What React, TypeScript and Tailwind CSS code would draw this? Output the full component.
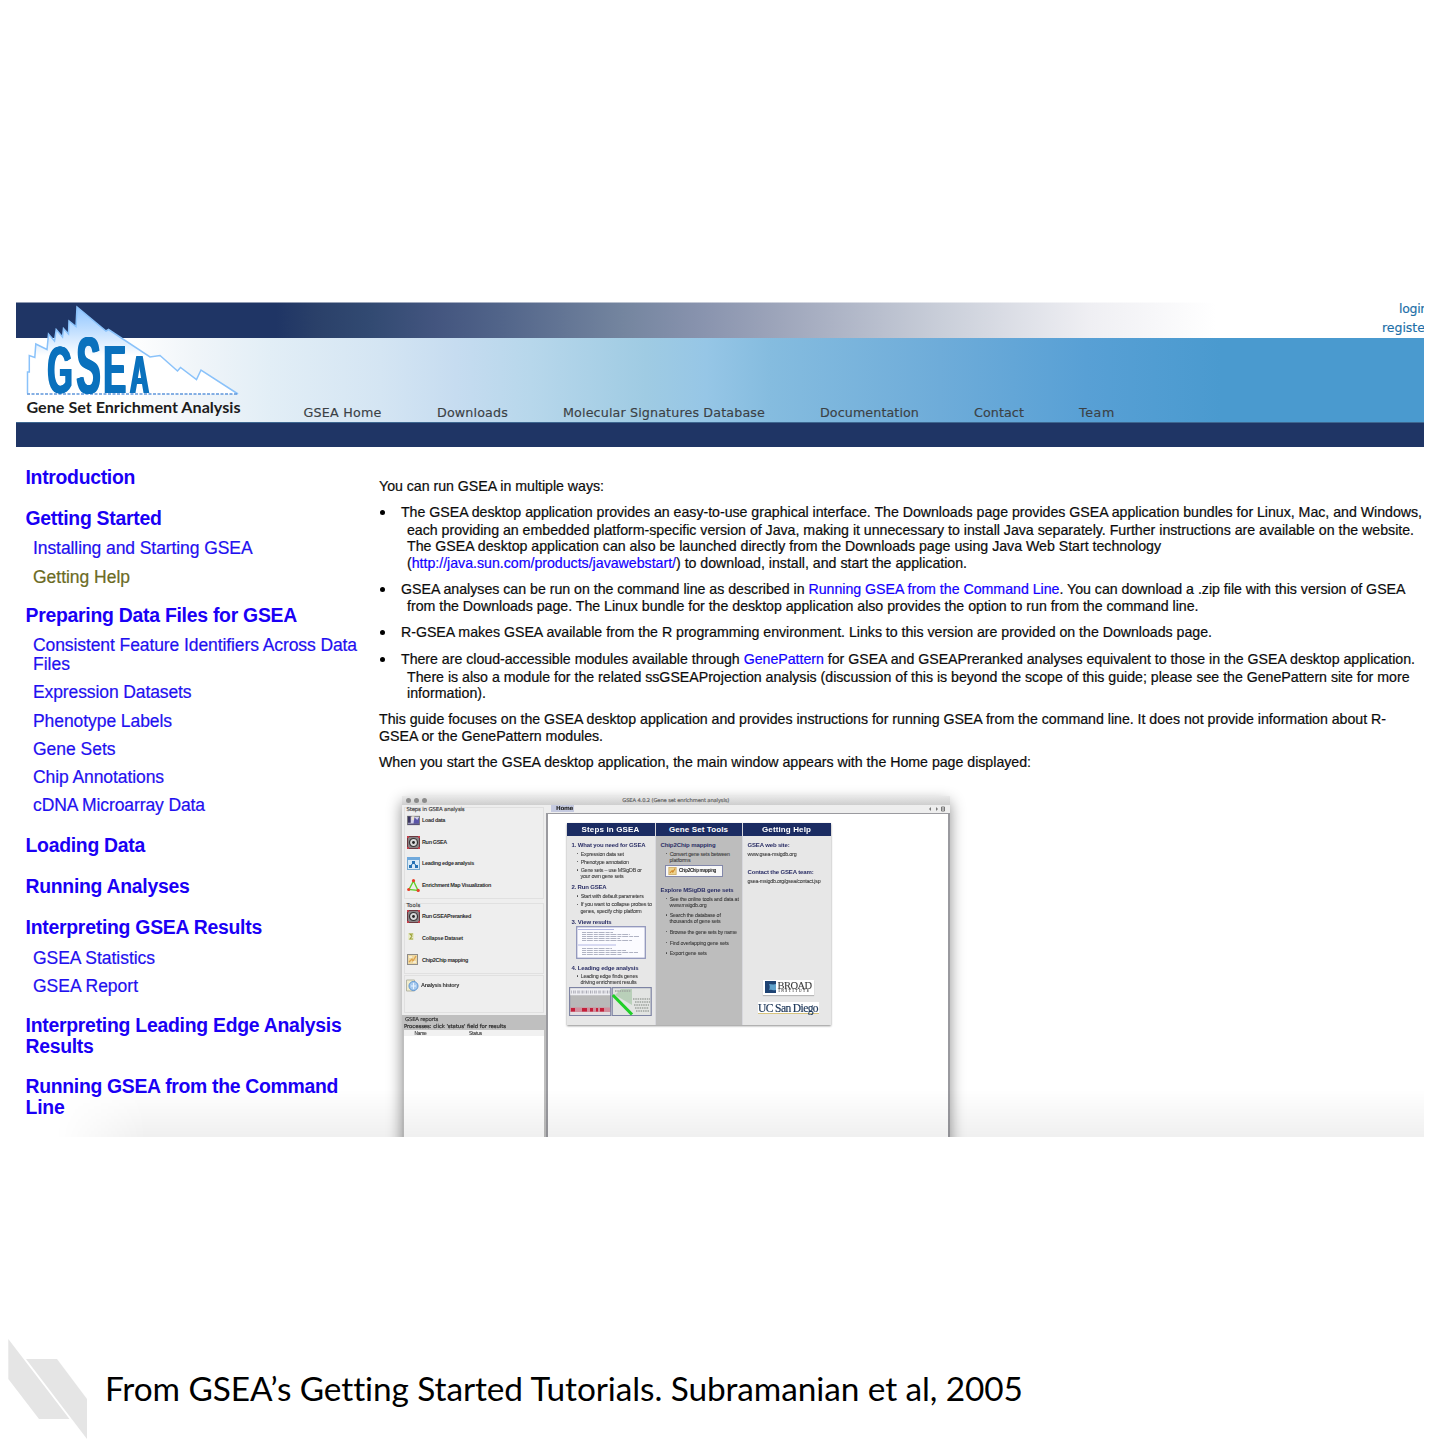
import { useLayoutEffect, useRef, type ReactNode } from 'react';

/** A single line of text whose tracking is adjusted so that it fills `w` pixels. */
function Fit({ w, className = '', children }: { w: number; className?: string; children: ReactNode }) {
  const ref = useRef<HTMLSpanElement>(null);
  useLayoutEffect(() => {
    const el = ref.current;
    if (!el) return;
    el.style.letterSpacing = '0px';
    const count = (el.textContent || '').length;
    const natural = el.offsetWidth > 0 ? el.getBoundingClientRect().width : w;
    el.style.letterSpacing = `${(w - natural) / Math.max(1, count)}px`;
  }, [w]);
  return (
    <div className={`whitespace-nowrap ${className}`}>
      <span ref={ref} className="inline-block">
        {children}
      </span>
    </div>
  );
}

function Logo() {
  const letter = 'fill-[#0a71bd] font-bold [font-family:"Liberation_Sans",Arial,sans-serif]';
  return (
    <svg viewBox="16 302 240 120" width="240" height="120" className="absolute left-0 top-0">
      <defs>
        <linearGradient id="peak" x1="0" y1="307" x2="0" y2="356" gradientUnits="userSpaceOnUse">
          <stop offset="0" stopColor="#8fc5ff" />
          <stop offset="0.5" stopColor="#c3e0ff" />
          <stop offset="1" stopColor="#ffffff" />
        </linearGradient>
      </defs>
      <path
        d="M27.5 393.5V372H29.3V355.5L34.8 357.5L35.8 344L47 349.5L48.5 334L54.5 341L56.2 329.5L62.5 337L63.5 328.5L68.5 334L69 321L76 326.5L77 307L106 331L108.5 329.5L150 357L160 355.5L177.500 371L180.500 367.500L196.500 379.500L201 370L238 394Z"
        fill="url(#peak)"
      />
      <path
        d="M27.5 393.5V372H29.3V355.5L34.8 357.5L35.8 344L47 349.5L48.5 334L54.5 341L56.2 329.5L62.5 337L63.5 328.5L68.5 334L69 321L76 326.5L77 307L106 331L108.5 329.5L150 357L160 355.5L177.500 371L180.500 367.500L196.500 379.500L201 370L238 394"
        fill="none"
        stroke="#8ac2fa"
        strokeWidth="1.500"
      />
      <path d="M27 394H238" stroke="#5f96dc" strokeWidth="1.5" strokeDasharray="3 1.5" />
      <g className="[filter:drop-shadow(1px_0_0_#0a71bd)_drop-shadow(-1px_0_0_#0a71bd)]">
        <text x="47.500" y="393" fontSize="66" textLength="25" lengthAdjust="spacingAndGlyphs" className={letter}>G</text>
        <text x="76.500" y="393" fontSize="80" textLength="24" lengthAdjust="spacingAndGlyphs" className={letter}>S</text>
        <text x="103.500" y="393" fontSize="68" textLength="22.500" lengthAdjust="spacingAndGlyphs" className={letter}>E</text>
        <text x="130" y="393" fontSize="53" textLength="19" lengthAdjust="spacingAndGlyphs" className={letter}>A</text>
      </g>
      <text
        x="26.500"
        y="412.500"
        fontSize="15.800"
        textLength="214"
        lengthAdjust="spacingAndGlyphs"
        className='fill-[#1c1c1c] font-bold [font-family:Lato,sans-serif]'
      >
        Gene Set Enrichment Analysis
      </text>
    </svg>
  );
}

function Header() {
  const nav = "text-[12.7px] leading-4 text-[#3b4145] [-webkit-text-stroke:0.15px]";
  return (
    <header className='relative h-[145px] shrink-0 [font-family:"DejaVu_Sans",Verdana,sans-serif]'>
      <div className="flex h-[36px] justify-end border-t border-white/50 bg-[linear-gradient(90deg,#1f3565_0px,#1f3565_260px,#2a4069_300px,#324a72_355px,#43557f_420px,#52658a_487px,#74859f_607px,#8792ad_680px,#9ba3b9_754px,#c9ced9_924px,#e0e2e9_1014px,#efeff3_1074px,#ffffff_1200px)]">
        <div className="flex w-[42px] flex-col overflow-visible text-[12.5px] text-[#1d6fa8] [-webkit-text-stroke:0.15px]">
          <Fit w={29} className="ml-[17px] h-[19px] leading-[12px]">login</Fit>
          <Fit w={48} className="h-4 leading-[12px]">register</Fit>
        </div>
      </div>
      <div className="h-[84px] bg-[linear-gradient(90deg,#ffffff_0px,#ffffff_110px,#f0f5f9_180px,#e2eef6_254px,#d4e5f3_365px,#c6dcf0_440px,#b7d7eb_515px,#9fcbe3_630px,#96c6e6_690px,#85bcdf_754px,#6eacd9_924px,#58a0d5_1070px,#4a9acf_1205px)]">
        <nav className="flex pl-[287.500px] pt-[67px]">
          <Fit w={78} className={`w-[133.500px] ${nav}`}>GSEA Home</Fit>
          <Fit w={71} className={`w-[126px] ${nav}`}>Downloads</Fit>
          <Fit w={202} className={`w-[257px] ${nav}`}>Molecular Signatures Database</Fit>
          <Fit w={99} className={`w-[154px] ${nav}`}>Documentation</Fit>
          <Fit w={50} className={`w-[105px] ${nav}`}>Contact</Fit>
          <Fit w={36} className={nav}>Team</Fit>
        </nav>
      </div>
      <div className="h-[25px] border-t border-[#3d6690] bg-[#1f3565]" />
      <Logo />
    </header>
  );
}

function Sidebar() {
  const head = 'h-[18px] pl-[9.5px] text-[19.4px] leading-[18px] font-bold text-[#1a00f5]';
  const item = 'relative top-[0.6px] h-[18px] pl-[17px] text-[17.5px] leading-[18px] text-[#1f10f0] [-webkit-text-stroke:0.2px]';
  return (
    <aside className="w-[363px] shrink-0 pt-[20.9px]">
      <Fit w={109.5} className={head}>Introduction</Fit>
      <Fit w={136} className={`mt-[22.9px] ${head}`}>Getting Started</Fit>
      <Fit w={219.5} className={`mt-[12.1px] ${item}`}>Installing and Starting GSEA</Fit>
      <Fit w={97} className="relative top-[0.6px] mt-[10.5px] h-[18px] pl-[17px] text-[17.5px] leading-[18px] text-[#6b6b1f] [-webkit-text-stroke:0.2px]">Getting Help</Fit>
      <Fit w={271.5} className={`mt-[20.5px] ${head}`}>Preparing Data Files for GSEA</Fit>
      <Fit w={324} className={`mt-[12px] ${item}`}>Consistent Feature Identifiers Across Data</Fit>
      <Fit w={37} className={`mt-[0.5px] ${item}`}>Files</Fit>
      <Fit w={158.5} className={`mt-[10.5px] ${item}`}>Expression Datasets</Fit>
      <Fit w={139} className={`mt-[10.5px] ${item}`}>Phenotype Labels</Fit>
      <Fit w={82.5} className={`mt-[10px] ${item}`}>Gene Sets</Fit>
      <Fit w={131} className={`mt-[10.2px] ${item}`}>Chip Annotations</Fit>
      <Fit w={172} className={`mt-[10.3px] ${item}`}>cDNA Microarray Data</Fit>
      <Fit w={119.5} className={`mt-[22px] ${head}`}>Loading Data</Fit>
      <Fit w={164} className={`mt-[23.5px] ${head}`}>Running Analyses</Fit>
      <Fit w={236.5} className={`mt-[23px] ${head}`}>Interpreting GSEA Results</Fit>
      <Fit w={122} className={`mt-[12px] ${item}`}>GSEA Statistics</Fit>
      <Fit w={105} className={`mt-[10px] ${item}`}>GSEA Report</Fit>
      <Fit w={316} className={`mt-[21.5px] ${head}`}>Interpreting Leading Edge Analysis</Fit>
      <Fit w={68} className={`mt-[3.3px] ${head}`}>Results</Fit>
      <Fit w={312.5} className={`mt-[21.9px] ${head}`}>Running GSEA from the Command</Fit>
      <Fit w={39} className={`mt-[3.3px] ${head}`}>Line</Fit>
    </aside>
  );
}

function Bullet({ w, className = '', children }: { w: number; className?: string; children: ReactNode }) {
  return (
    <div className={`flex h-4 items-center ${className}`}>
      <span className="mt-px mr-[15.7px] ml-[0.8px] size-[5.5px] shrink-0 rounded-full bg-black" />
      <Fit w={w}>{children}</Fit>
    </div>
  );
}

function GuideText() {
  const link = 'text-[#1400ff]';
  return (
    <div className="text-[14.2px] leading-4 text-[#0c0c0c] [-webkit-text-stroke:0.2px]">
      <Fit w={225} className="h-4">You can run GSEA in multiple ways:</Fit>
      <Bullet w={1021} className="mt-[10px]">The GSEA desktop application provides an easy-to-use graphical interface. The Downloads page provides GSEA application bundles for Linux, Mac, and Windows,</Bullet>
      <Fit w={1007} className="mt-[2px] h-4 pl-7">each providing an embedded platform-specific version of Java, making it unnecessary to install Java separately. Further instructions are available on the website.</Fit>
      <Fit w={754} className="h-4 pl-7">The GSEA desktop application can also be launched directly from the Downloads page using Java Web Start technology</Fit>
      <Fit w={560} className="mt-[1px] h-4 pl-7">(<span className={link}>http://java.sun.com/products/javawebstart/</span>) to download, install, and start the application.</Fit>
      <Bullet w={1004.5} className="mt-[10px]">GSEA analyses can be run on the command line as described in <span className={link}>Running GSEA from the Command Line</span>. You can download a .zip file with this version of GSEA</Bullet>
      <Fit w={791.5} className="mt-[1px] h-4 pl-7">from the Downloads page. The Linux bundle for the desktop application also provides the option to run from the command line.</Fit>
      <Bullet w={811} className="mt-[10px]">R-GSEA makes GSEA available from the R programming environment. Links to this version are provided on the Downloads page.</Bullet>
      <Bullet w={1014} className="mt-[11px]">There are cloud-accessible modules available through <span className={link}>GenePattern</span> for GSEA and GSEAPreranked analyses equivalent to those in the GSEA desktop application.</Bullet>
      <Fit w={1002.5} className="mt-[2px] h-4 pl-7">There is also a module for the related ssGSEAProjection analysis (discussion of this is beyond the scope of this guide; please see the GenePattern site for more</Fit>
      <Fit w={79} className="h-4 pl-7">information).</Fit>
      <Fit w={1007} className="mt-[10px] h-4">This guide focuses on the GSEA desktop application and provides instructions for running GSEA from the command line. It does not provide information about R-</Fit>
      <Fit w={224} className="mt-[1px] h-4">GSEA or the GenePattern modules.</Fit>
      <Fit w={652} className="mt-[10px] h-4">When you start the GSEA desktop application, the main window appears with the Home page displayed:</Fit>
    </div>
  );
}

function TargetIcon() {
  return (
    <svg width="13" height="13" viewBox="0 0 13 13">
      <rect x="0.500" y="0.500" width="12" height="12" fill="#8a8184" stroke="#6b3a40" />
      <circle cx="6.500" cy="6.500" r="4" fill="#d9d9d9" stroke="#353535" strokeWidth="1.2" />
      <circle cx="6.500" cy="6.500" r="1.4" fill="#222" />
      <path d="M0 0h2v2H0zM11 0h2v2h-2zM0 11h2v2H0zM11 11h2v2h-2z" fill="#c2404c" />
    </svg>
  );
}

function LoadIcon() {
  return (
    <svg width="14" height="11" viewBox="0 0 14 11">
      <rect x="0.500" y="1" width="13" height="9" fill="#cfcfe8" stroke="#777" />
      <path d="M1 1h3v7H1z" fill="#3a3560" />
      <path d="M5 1h3v4H5z" fill="#ece3cf" />
      <path d="M8 2l3 3l2-3v7H7z" fill="#5a55a8" />
      <path d="M1 9.500h12" stroke="#514b75" strokeWidth="1.5" />
    </svg>
  );
}

function EdgeIcon() {
  return (
    <svg width="13" height="13" viewBox="0 0 13 13">
      <rect x="0.500" y="0.500" width="12" height="12" fill="#d8ebf8" stroke="#78a9cf" />
      <path d="M0 0h13v3H0z" fill="#70a9dc" />
      <path d="M5 4h3v3H5zM2 8h3v3H2zM8 8h3v3H8z" fill="#2472b6" />
      <path d="M6.500 6L3 9M6.500 6L10 9" stroke="#2472b6" />
    </svg>
  );
}

function MapIcon() {
  return (
    <svg width="13" height="13" viewBox="0 0 13 13">
      <path d="M6.500 2L2 10.500L11 11.500Z" fill="none" stroke="#62d02c" strokeWidth="1.4" />
      <circle cx="6.500" cy="1.700" r="1.6" fill="#e8402a" />
      <circle cx="1.700" cy="10.500" r="1.6" fill="#e8402a" />
      <circle cx="11.200" cy="11.400" r="1.6" fill="#e8402a" />
    </svg>
  );
}

function CollapseIcon() {
  return (
    <svg width="13" height="13" viewBox="0 0 13 13">
      <rect x="1" y="1" width="6" height="7" fill="#e7e9c9" />
      <path d="M6 2H3l2 2l-2 3h3" fill="none" stroke="#9aa136" strokeWidth="1.1" />
    </svg>
  );
}

function ChipIcon() {
  return (
    <svg width="13" height="13" viewBox="0 0 13 13">
      <rect x="0.500" y="0.500" width="10" height="10" fill="#edd9a4" stroke="#8d8b88" />
      <path d="M2 8l3-3l1 2l3-5" fill="none" stroke="#dda14a" strokeWidth="1.3" />
      <path d="M2 3h3M6 8h3" stroke="#fff" />
    </svg>
  );
}

function HistoryIcon() {
  return (
    <svg width="13" height="13" viewBox="0 0 13 13">
      <path d="M0.500 1h8v11h-8z" fill="#f0eccd" stroke="#b3b4a4" />
      <circle cx="7.500" cy="7" r="4.500" fill="#a7caef" stroke="#5c93d0" />
      <path d="M5 7h5M7.500 4v6" stroke="#e8f3ff" />
    </svg>
  );
}

function ToolRow({ icon, w, className = '', children }: { icon: ReactNode; w: number; className?: string; children: string }) {
  return (
    <div className={`flex h-[13px] items-center text-[5.5px] leading-[13px] font-bold text-[#2e2e2e] ${className}`}>
      <span className="mr-[2.500px] flex w-[13px] shrink-0">{icon}</span>
      <Fit w={w}>{children}</Fit>
    </div>
  );
}

function LeftPane() {
  const verdana = '[font-family:"DejaVu_Sans",sans-serif] text-[5.4px] leading-[6px] [-webkit-text-stroke:0.15px]';
  return (
    <div className="flex w-[143.500px] shrink-0 flex-col bg-[#eeeeee] pt-[2px]">
      <fieldset className="mx-[2px] h-[92px] border border-[#e0e0e0] pl-[1.5px]">
        <Fit w={58} className={`-mt-[2px] text-[#3a3a3a] ${verdana}`}>Steps in GSEA analysis</Fit>
        <ToolRow icon={<LoadIcon />} w={23} className="mt-[2px]">Load data</ToolRow>
        <ToolRow icon={<TargetIcon />} w={25} className="mt-[9px]">Run GSEA</ToolRow>
        <ToolRow icon={<EdgeIcon />} w={52} className="mt-[8.500px]">Leading edge analysis</ToolRow>
        <ToolRow icon={<MapIcon />} w={69} className="mt-[9px]">Enrichment Map Visualization</ToolRow>
      </fieldset>
      <fieldset className="mx-[2px] mt-[4px] h-[71px] border border-[#e0e0e0] pl-[1.5px]">
        <Fit w={14} className={`-mt-[2px] text-[#3a3a3a] ${verdana}`}>Tools</Fit>
        <ToolRow icon={<TargetIcon />} w={49} className="mt-[2px]">Run GSEAPreranked</ToolRow>
        <ToolRow icon={<CollapseIcon />} w={41} className="mt-[9px]">Collapse Dataset</ToolRow>
        <ToolRow icon={<ChipIcon />} w={46} className="mt-[9px]">Chip2Chip mapping</ToolRow>
      </fieldset>
      <fieldset className="mx-[2px] mt-[1px] h-[38px] border border-[#e0e0e0] pl-[0.5px] pt-[3px]">
        <ToolRow icon={<HistoryIcon />} w={38}>Analysis history</ToolRow>
      </fieldset>
      <div className="mt-[2px] flex grow flex-col bg-[#bfbfbf] pt-[1.500px]">
        <Fit w={33} className={`pl-[3px] text-[#333] ${verdana}`}>GSEA reports</Fit>
        <Fit w={102} className={`mt-[1.3px] pl-[2px] text-[#222] ${verdana}`}>Processes: click 'status' field for results</Fit>
        <div className="mx-[2px] mt-[0.700px] grow bg-white text-[4.8px] leading-[7px] text-[#333] [-webkit-text-stroke:0.1px]">
          <div className="flex h-[6px] bg-[#f1f1f1]">
            <Fit w={12} className="w-[65px] pl-[10.500px]">Name</Fit>
            <Fit w={13}>Status</Fit>
          </div>
        </div>
      </div>
    </div>
  );
}

const colHead = 'flex h-[13.500px] items-center justify-center bg-[#1b2c62] pt-px text-[8px] font-bold text-white';
const h = 'h-[6px] pl-[5px] text-[6px] leading-[6px] font-bold text-[#2b2f66]';
const p = 'h-[6px] text-[5.300px] leading-[6px] text-[#3c3c3c] [-webkit-text-stroke:0.08px]';

function Dot({ w, className = '', children }: { w: number; className?: string; children: string }) {
  return (
    <div className={`flex items-center pl-[10.500px] ${p} ${className}`}>
      <span className="mr-[2.500px] size-[1.2px] shrink-0 rounded-full bg-[#444]" />
      <Fit w={w}>{children}</Fit>
    </div>
  );
}

function ReportThumb() {
  return (
    <svg width="70" height="33" viewBox="0 0 70 33" className="mt-[1.500px] ml-[9px]">
      <rect x="0.700" y="0.700" width="68.600" height="31.600" fill="#fbfbff" stroke="#9095ba" strokeWidth="1.3" />
      <path d="M2 3.500h36M2 19h38" stroke="#a2a7dd" strokeWidth="0.800" />
      <path d="M6 6.500h31M6 8.500h48M6 10.500h57M6 12.500h38M6 14.500h50M6 22.500h30M6 24.500h44M6 26.500h56M6 28.500h40" stroke="#8f93a9" strokeWidth="0.700" strokeDasharray="4 0.800 6 1" />
    </svg>
  );
}

function HeatThumbs() {
  return (
    <svg width="83" height="29" viewBox="0 0 83 29" className="mt-[2px] ml-[2px]">
      <rect x="0.600" y="0.600" width="41" height="28" fill="#b9b9b9" stroke="#7d83a3" strokeWidth="1.200" />
      <path d="M1.200 1.200h40v7h-40z" fill="#eeeef2" />
      <path d="M2 5h39" stroke="#a9a9b4" strokeWidth="3" strokeDasharray="0.700 1.500 1.200 0.800" />
      <path d="M1.200 20.500h40v4.500h-40z" fill="#cf8f9d" />
      <path d="M2 22.700h4M13 22.700h5M21 22.700h3M27 22.700h2M31 22.700h4" stroke="#c41f3a" strokeWidth="3.500" />
      <path d="M1.200 25h40v3h-40z" fill="#e3dce0" />
      <rect x="43.200" y="0.600" width="39" height="28" fill="#e2e4e2" stroke="#7d83a3" strokeWidth="1.200" />
      <path d="M52 2h11v16L46 8z" fill="#b9d0b9" />
      <path d="M46 4h16M64 12h17M66 15h15M65 18h15M66 21h14M67 24h13" stroke="#9da29d" strokeWidth="1.600" strokeDasharray="1.500 0.800" />
      <path d="M43.800 8L63 27.500" stroke="#20cf28" strokeWidth="3.200" />
    </svg>
  );
}

function HomePanel() {
  return (
    <div className="mt-[9px] ml-[19px] flex h-[202px] w-[264px] gap-[1px] bg-[#d8d8dd] shadow-[0_1px_2px_rgba(0,0,0,0.45)]">
      <section className="w-[88px] bg-[#e7e7e7]">
        <div className={colHead}><Fit w={58}>Steps in GSEA</Fit></div>
        <Fit w={74} className={`mt-[6px] ${h}`}>1. What you need for GSEA</Fit>
        <Dot w={43} className="mt-[2.500px]">Expression data set</Dot>
        <Dot w={48} className="mt-[2.300px]">Phenotype annotation</Dot>
        <Dot w={61} className="mt-[2.200px]">Gene sets – use MSigDB or</Dot>
        <Fit w={43} className={`mt-[0.300px] pl-[14px] ${p}`}>your own gene sets</Fit>
        <Fit w={35} className={`mt-[5px] ${h}`}>2. Run GSEA</Fit>
        <Dot w={63} className="mt-[2.700px]">Start with default parameters</Dot>
        <Dot w={71} className="mt-[2.300px]">If you want to collapse probes to</Dot>
        <Fit w={61} className={`mt-[0.300px] pl-[14px] ${p}`}>genes, specify chip platform</Fit>
        <Fit w={40} className={`mt-[5px] ${h}`}>3. View results</Fit>
        <ReportThumb />
        <Fit w={67} className={`mt-[5.500px] ${h}`}>4. Leading edge analysis</Fit>
        <Dot w={57} className="mt-[2.500px]">Leading edge finds genes</Dot>
        <Fit w={56} className={`-mt-[0.200px] pl-[14px] ${p}`}>driving enrichment results</Fit>
        <HeatThumbs />
      </section>
      <section className="w-[86px] bg-[#bdbdbd]">
        <div className={colHead}><Fit w={59}>Gene Set Tools</Fit></div>
        <Fit w={55} className={`mt-[6px] ${h}`}>Chip2Chip mapping</Fit>
        <Dot w={60} className="mt-[2.500px]">Convert gene sets between</Dot>
        <Fit w={21} className={`pl-[14px] ${p}`}>platforms</Fit>
        <div className="mt-[2px] ml-[9.500px] flex h-[12.500px] w-[58px] items-center border border-[#8388aa] bg-[#f8f8f8] pl-[2px]">
          <svg width="9" height="8" viewBox="0 0 11 11" className="mr-[2px]">
            <rect x="0.500" y="0.500" width="10" height="10" fill="#edd48e" stroke="#c9a45c" />
            <path d="M2 8l3-3l1 2l3-5" fill="none" stroke="#d2892c" strokeWidth="1.500" />
          </svg>
          <Fit w={37} className="text-[4.600px] leading-[6px] font-bold text-[#222]">Chip2Chip mapping</Fit>
        </div>
        <Fit w={73} className={`mt-[9.500px] ${h}`}>Explore MSigDB gene sets</Fit>
        <Dot w={69} className="mt-[3px]">See the online tools and data at</Dot>
        <Fit w={37} className={`pl-[14px] ${p}`}>www.msigdb.org</Fit>
        <Dot w={51} className="mt-[4.500px]">Search the database of</Dot>
        <Fit w={51} className={`pl-[14px] ${p}`}>thousands of gene sets</Fit>
        <Dot w={67} className="mt-[4.500px]">Browse the gene sets by name</Dot>
        <Dot w={59} className="mt-[5px]">Find overlapping gene sets</Dot>
        <Dot w={37} className="mt-[4.500px]">Export gene sets</Dot>
      </section>
      <section className="flex w-[88px] flex-col bg-[#e7e7e7]">
        <div className={colHead}><Fit w={49}>Getting Help</Fit></div>
        <Fit w={42} className={`mt-[6px] ${h}`}>GSEA web site:</Fit>
        <Fit w={49} className={`mt-[2.500px] pl-[5px] ${p}`}>www.gsea-msigdb.org</Fit>
        <Fit w={66} className={`mt-[12.500px] ${h}`}>Contact the GSEA team:</Fit>
        <Fit w={73} className={`mt-[2.500px] pl-[5px] ${p}`}>gsea-msigdb.org/gsea/contact.jsp</Fit>
        <div className='mt-[96px] ml-[20px] flex h-[15px] w-[51px] items-center gap-[2px] bg-white pl-[2px] shadow-[0_1px_1px_rgba(0,0,0,0.2)] [font-family:"Liberation_Serif",serif] text-[#3b3b3b] [-webkit-text-stroke:0.1px]'>
          <svg width="11" height="12" viewBox="0 0 11 12">
            <rect width="11" height="12" fill="#1e4373" />
            <path d="M4 3c2 0 4 1 7 0v6c-3 1-5-1-7 0c1-2 1-4 0-6Z" fill="#5fa1ca" />
          </svg>
          <div>
            <Fit w={34} className="h-[8.500px] text-[10.500px] leading-[9px]">BROAD</Fit>
            <Fit w={32} className="h-[4px] pl-[1px] text-[3.500px] leading-[4px]">INSTITUTE</Fit>
          </div>
        </div>
        <div className='mt-[7px] ml-[15px] h-[12.500px] w-[61px] border-b border-[#d8c47e] bg-white [font-family:"Liberation_Serif",serif] text-[11.500px] leading-[12px] text-[#1b3557] [-webkit-text-stroke:0.2px]'>
          <Fit w={60} className="pl-[0.500px]">UC San Diego</Fit>
        </div>
      </section>
    </div>
  );
}

function AppWindow() {
  return (
    <div className="mt-[26px] ml-[23px] flex h-[420px] w-[547.500px] flex-col bg-[#eeeeee] shadow-[0_6px_14px_rgba(0,0,0,0.45)] blur-[0.55px]">
      <div className="relative flex h-[8.500px] shrink-0 items-center justify-center bg-linear-to-b from-[#e9e9e9] to-[#cecece]">
        <div className="absolute left-[3.500px] flex gap-[3.200px]">
          <span className="size-[5px] rounded-full bg-[#8b8b8b]" />
          <span className="size-[5px] rounded-full bg-[#8b8b8b]" />
          <span className="size-[5px] rounded-full bg-[#8b8b8b]" />
        </div>
        <Fit w={107} className='[font-family:"DejaVu_Sans",sans-serif] text-[5.200px] leading-[8px] text-[#606060] [-webkit-text-stroke:0.15px]'>GSEA 4.0.2 (Gene set enrichment analysis)</Fit>
      </div>
      <div className="flex grow">
        <LeftPane />
        <div className="flex grow flex-col">
          <div className="flex h-[8px] items-center pr-[4px] pl-[5.500px] text-[#888]">
            <div className="flex h-[7px] w-[23px] items-center bg-[#c5cae0] pl-[5px] text-[5.600px] leading-[7px] font-bold text-[#222]">
              <Fit w={17} className='[font-family:"DejaVu_Sans",sans-serif]'>Home</Fit>
            </div>
            <svg width="18" height="6" viewBox="0 0 18 6" className="ml-auto">
              <path d="M3 1L1 3l2 2ZM8 1l2 2l-2 2Z" fill="#777" />
              <path d="M13.500 1h3v4h-3zM13.500 3h3" fill="none" stroke="#777" />
            </svg>
          </div>
          <div className="grow border-t-[1.500px] border-r-2 border-l-[2.500px] border-[#9a9a9f] bg-white">
            <HomePanel />
          </div>
        </div>
      </div>
    </div>
  );
}

export default function App() {
  return (
    <div className='flex h-[1440px] w-[1440px] flex-col overflow-hidden bg-white pt-[302px] [font-family:"Liberation_Sans",Arial,sans-serif]'>
      <main className="relative mx-4 flex h-[835px] shrink-0 flex-col overflow-hidden">
        <Header />
        <div className="flex">
          <Sidebar />
          <div className="shrink-0 pt-[31px]">
            <GuideText />
            <AppWindow />
          </div>
        </div>
        <div className="absolute inset-x-0 bottom-0 h-[48px] bg-linear-to-b from-black/0 to-black/[0.06] [mask-image:linear-gradient(90deg,transparent_40px,black_130px)]" />
      </main>
      <footer className="mt-[202px] flex shrink-0">
        <svg width="80" height="101" viewBox="8 1339 80 101" className="ml-2">
          <path d="M8.300 1339V1379L39 1419H69.500ZM26 1359H57L87 1399V1439Z" fill="#e5e5e5" />
        </svg>
        <Fit w={917} className="mt-[25px] ml-[17px] text-[33.4px] leading-[48px] text-black [font-family:Lato,sans-serif]">
          From GSEA’s Getting Started Tutorials. Subramanian et al, 2005
        </Fit>
      </footer>
    </div>
  );
}
